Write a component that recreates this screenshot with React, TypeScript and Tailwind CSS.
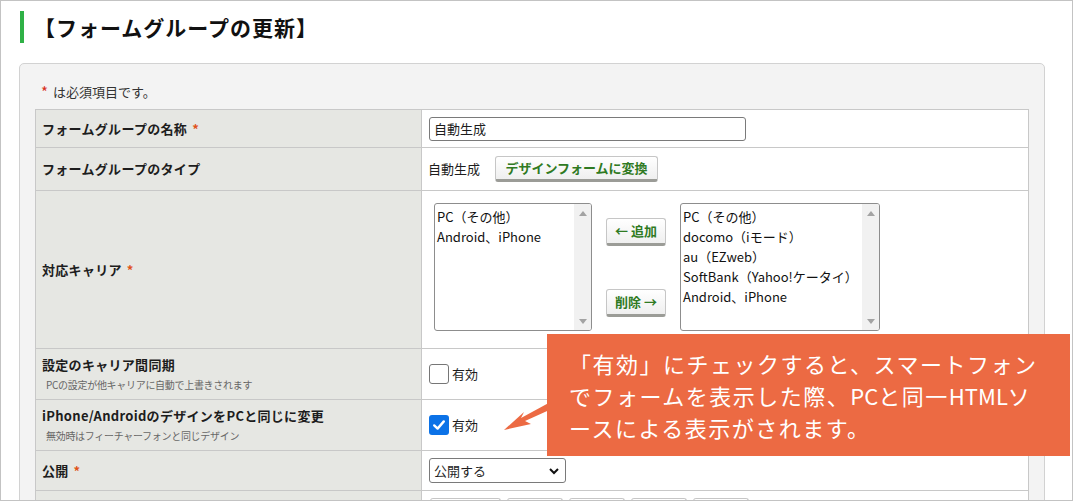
import React from 'react'

function Req() {
  return <span className="ml-[5px] font-bold text-[#e0531b]">*</span>
}

function Btn({ children, className = '' }: { children?: React.ReactNode; className?: string }) {
  return (
    <div
      className={`flex h-[26px] items-center justify-center rounded-[3px] border border-[#c6c6c6] border-b-[3px] border-b-[#9b9c97] bg-linear-to-b from-white to-[#efefef] text-[13px] font-bold text-[#2f7a22] ${className}`}
    >
      {children}
    </div>
  )
}

function Arrow({ up }: { up?: boolean }) {
  return (
    <svg width="8" height="5" viewBox="0 0 8 5">
      <path d={up ? 'M0 5 L4 0 L8 5 Z' : 'M0 0 L4 5 L8 0 Z'} fill="#a3a3a3" />
    </svg>
  )
}

function ListBox({ items, className }: { items: string[]; className: string }) {
  return (
    <div className={`flex h-[128px] overflow-hidden rounded-[3px] border border-[#8d8d8d] bg-white ${className}`}>
      <div className="flex-1 whitespace-nowrap pl-[2px] pt-[3px] text-[13px] leading-[20px] text-[#111]">
        {items.map((it) => (
          <div key={it}>{it}</div>
        ))}
      </div>
      <div className="flex w-[17px] flex-col items-center justify-between bg-[#f1f1f1] pb-[6px] pt-[7px]">
        <Arrow up />
        <Arrow />
      </div>
    </div>
  )
}

function Check({ checked }: { checked?: boolean }) {
  if (checked)
    return (
      <div className="flex h-[20px] w-[20px] items-center justify-center rounded-[3px] bg-[#0b72e7]">
        <svg width="14" height="14" viewBox="0 0 14 14">
          <path d="M2.2 7.4 L5.6 10.6 L11.8 3.4" stroke="white" strokeWidth="2.4" fill="none" strokeLinecap="round" strokeLinejoin="round" />
        </svg>
      </div>
    )
  return <div className="h-[20px] w-[20px] rounded-[3px] border border-[#767676] bg-white" />
}

const labelCls = 'flex w-[386px] shrink-0 border-r border-[#c8c8c8] bg-[#e6e7e3] pl-[6px] text-[13px] font-bold tracking-[0.3px] text-[#1d1d1d]'
const rowCls = 'flex border-b border-[#c8c8c8]'

export default function App() {
  return (
    <div className="relative h-[501px] w-[1073px] overflow-hidden border border-[#c3c3c3] bg-white font-['Noto_Sans_CJK_JP','Noto_Sans',sans-serif] text-[#1d1d1d]">
      <div className="ml-[19px] mt-[10px] flex h-[32px] items-center">
        <div className="h-[32px] w-[4px] bg-[#2fb146]" />
        <h1 className="ml-[10px] text-[21px] font-bold leading-[32px] tracking-[1px] text-[#111]">【フォームグループの更新】</h1>
      </div>

      <div className="ml-[18px] mt-[20px] h-[470px] w-[1026px] rounded-t-[5px] border border-[#d2d2d2] bg-[#f3f3f3] pl-[15px] pt-[19px]">
        <p className="flex h-[18px] items-center pl-[6px] text-[13px] leading-[18px] text-[#333]">
          <span className="mr-[5px] text-[15px] leading-[18px] text-[#d8301c]">*</span>は必須項目です。
        </p>

        <div className="mt-[8px] w-[994px] border-l border-r border-t border-[#c8c8c8] bg-white">
          <div className={`${rowCls} h-[38px]`}>
            <div className={`${labelCls} items-center`}>
              フォームグループの名称
              <Req />
            </div>
            <div className="flex items-center pl-[7px]">
              <div className="flex h-[24px] w-[317px] items-center rounded-[3px] border border-[#7a7a7a] pl-[4px] text-[13px]">
                自動生成
              </div>
            </div>
          </div>

          <div className={`${rowCls} h-[43px]`}>
            <div className={`${labelCls} items-center`}>フォームグループのタイプ</div>
            <div className="flex items-center pl-[6px] text-[13px]">
              <span>自動生成</span>
              <Btn className="ml-[15px] w-[163px]">デザインフォームに変換</Btn>
            </div>
          </div>

          <div className={`${rowCls} h-[158px]`}>
            <div className={`${labelCls} items-center`}>
              対応キャリア
              <Req />
            </div>
            <div className="flex items-start pl-[12px] pt-[12px]">
              <ListBox className="w-[158px]" items={['PC（その他）', 'Android、iPhone']} />
              <div className="ml-[14px] mt-[15px] flex w-[60px] flex-col gap-[43px]">
                <Btn className="h-[28px] w-[60px]">← 追加</Btn>
                <Btn className="h-[28px] w-[60px]">削除 →</Btn>
              </div>
              <ListBox
                className="ml-[14px] w-[200px]"
                items={['PC（その他）', 'docomo（iモード）', 'au（EZweb）', 'SoftBank（Yahoo!ケータイ）', 'Android、iPhone']}
              />
            </div>
          </div>

          <div className={`${rowCls} h-[51px]`}>
            <div className={`${labelCls} flex-col justify-center`}>
              <div className="leading-[18px]">設定のキャリア間同期</div>
              <div className="mt-[4px] pl-[4px] text-[10px] font-normal leading-[14px] tracking-[-0.3px] text-[#666]">
                PCの設定が他キャリアに自動で上書きされます
              </div>
            </div>
            <div className="flex items-center gap-[3px] pl-[7px] text-[13px]">
              <Check />
              有効
            </div>
          </div>

          <div className={`${rowCls} h-[51px]`}>
            <div className={`${labelCls} flex-col justify-center`}>
              <div className="leading-[18px]">iPhone/AndroidのデザインをPCと同じに変更</div>
              <div className="mt-[4px] pl-[4px] text-[10px] font-normal leading-[14px] tracking-[-0.3px] text-[#666]">
                無効時はフィーチャーフォンと同じデザイン
              </div>
            </div>
            <div className="flex items-center gap-[3px] pl-[7px] text-[13px]">
              <Check checked />
              有効
            </div>
          </div>

          <div className={`${rowCls} h-[40px]`}>
            <div className={`${labelCls} items-center`}>
              公開
              <Req />
            </div>
            <div className="flex items-center pl-[7px]">
              <div className="flex h-[25px] w-[137px] items-center justify-between rounded-[3px] border border-[#7a7a7a] pl-[4px] pr-[6px] text-[13px]">
                公開する
                <svg width="10" height="8" viewBox="0 0 10 8">
                  <path d="M1 2 L5 6 L9 2" stroke="#111" strokeWidth="2" fill="none" />
                </svg>
              </div>
            </div>
          </div>

          <div className="flex h-[60px]">
            <div className={labelCls} />
            <div className="flex gap-[6px] pl-[8px] pt-[7px]">
              <Btn className="w-[71px]" />
              <Btn className="w-[56px]" />
              <Btn className="w-[56px]" />
              <Btn className="w-[56px]" />
              <Btn className="w-[56px]" />
            </div>
          </div>
        </div>
      </div>

      <svg className="absolute left-[499px] top-[397px]" width="56" height="36" viewBox="500 398 56 36">
        <polygon points="504,430 524,412 521,418 556,399 556,407 525,421 531,424" fill="#ec6a43" />
      </svg>

      <div className="absolute left-[546px] top-[333px] h-[122px] w-[523px] whitespace-nowrap bg-[#ec6a43] pl-[22px] pt-[13px] text-[22px] leading-[32px] tracking-[1.5px] text-white">
        「有効」にチェックすると、スマートフォン
        <br />
        でフォームを表示した際、<span className="tracking-normal">PC</span>と同一<span className="tracking-normal">HTML</span>ソ
        <br />
        ースによる表示がされます。
      </div>
    </div>
  )
}
